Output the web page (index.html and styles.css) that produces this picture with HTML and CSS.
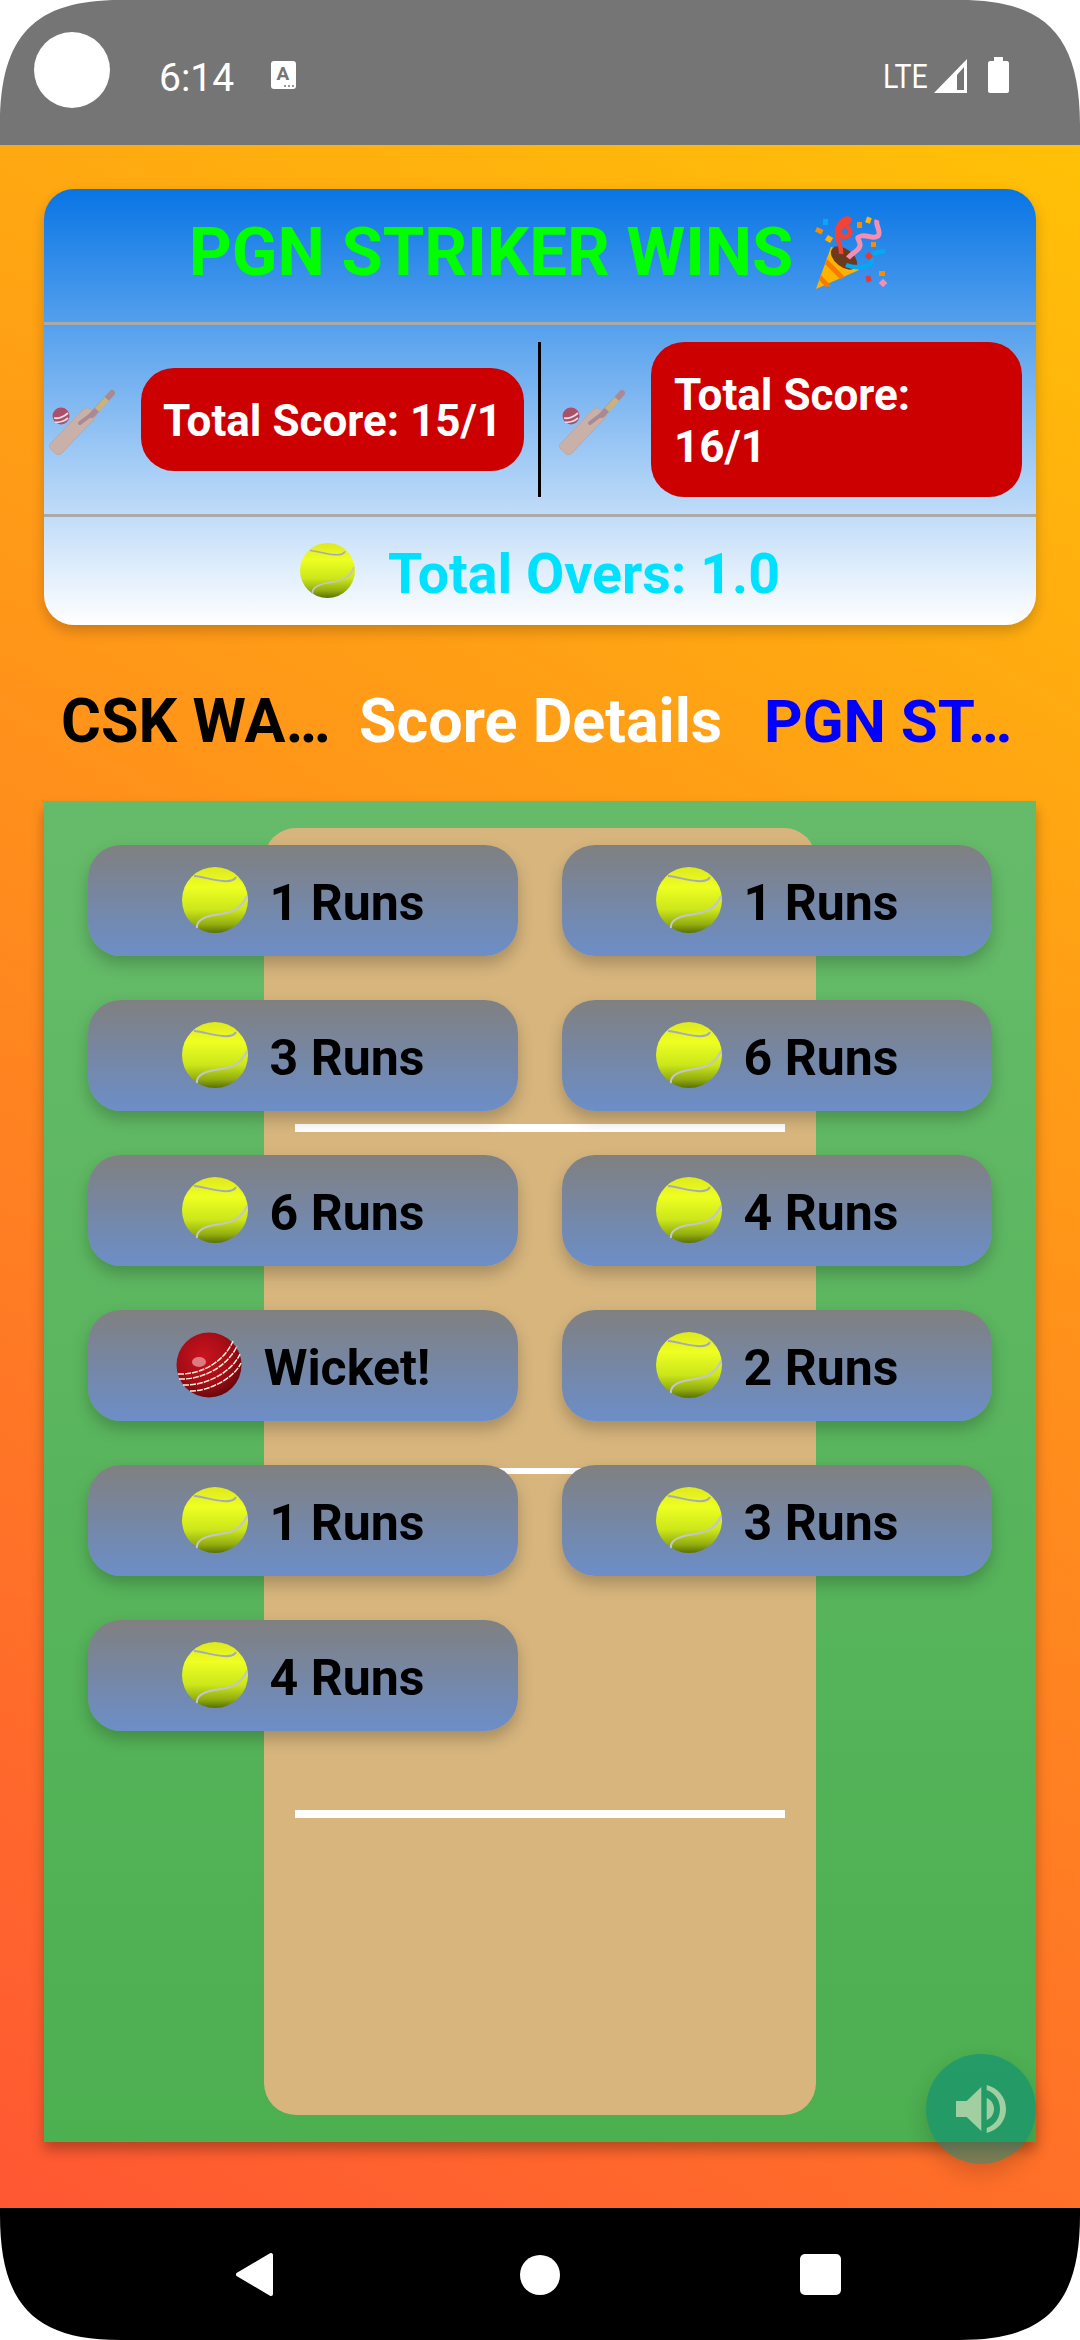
FILE: index.html
```html
<!DOCTYPE html>
<html>
<head>
	<meta charset="utf-8">
	<title>Match Result</title>
	<link rel="stylesheet" href="styles.css">
</head>
<body>
	<!-- shared drawings -->
	<svg class="sprite" aria-hidden="true">
		<defs>
			<linearGradient id="tennisFill" x1="0" y1="0" x2="0" y2="1">
				<stop offset="0" stop-color="#dfe81e"/>
				<stop offset="0.3" stop-color="#eeff22"/>
				<stop offset="0.65" stop-color="#cbe61a"/>
				<stop offset="0.87" stop-color="#93ad10"/>
				<stop offset="1" stop-color="#597000"/>
			</linearGradient>
			<radialGradient id="cricketFill" cx="0.42" cy="0.38" r="0.68">
				<stop offset="0" stop-color="#c9141f"/>
				<stop offset="0.6" stop-color="#a50c16"/>
				<stop offset="1" stop-color="#5c060b"/>
			</radialGradient>
			<symbol id="tennis" viewBox="0 0 66 66">
				<circle cx="33" cy="33" r="33" fill="url(#tennisFill)"/>
				<path d="M12 9C22 10 30 13 41 14C47 14.500 52 14 54 10" fill="none" stroke="#a4aab8" stroke-width="2"/>
				<path d="M15 61C14 54 22 50 32 48C45 46 58 45 65 29" fill="none" stroke="#c2c6cc" stroke-width="2"/>
			</symbol>
			<symbol id="cricket" viewBox="0 0 66 66">
				<circle cx="33" cy="33" r="32.500" fill="url(#cricketFill)"/>
				<ellipse cx="23" cy="30" rx="7" ry="5" fill="#eeb4b4" opacity="0.65"/>
				<g fill="none" stroke="#fbeed8" stroke-width="1.500" stroke-dasharray="6 1">
					<path d="M2 42C25 43 48 30 57 9"/>
					<path d="M3 47C27 48 52 34 61 14"/>
					<path d="M7 53C30 54 56 40 64 22"/>
					<path d="M14 59C34 59 58 46 65 31"/>
				</g>
			</symbol>
			<symbol id="bat" viewBox="19 19 66 67">
				<path d="M21 74L52 42C54 40 56 39 58 39L65 43C67 46 66 48 64 50L32 84C30 86 27 86 25 84L20 79C19 77 19 76 21 74Z" fill="#c9b1a9" stroke="#bda79f" stroke-width="1"/>
				<path d="M50 54L66 42" stroke="#a98a94" stroke-width="4" stroke-linecap="round"/>
				<path d="M62 46L82 24" stroke="#a98a94" stroke-width="6" stroke-linecap="round"/>
				<path d="M67 41L77 30" stroke="#c9b27e" stroke-width="6"/>
				<circle cx="31" cy="47" r="8.500" fill="#ac5069"/>
				<path d="M24 49C28 50 34 48 38 44M25 53C29 54 35 52 38 49" fill="none" stroke="#e3dce6" stroke-width="1.800"/>
			</symbol>
		</defs>
	</svg>

	<div class="screen">
		<header class="statusbar">
			<span class="camera"></span>
			<span class="clock">6:14</span>
			<svg class="a-icon" viewBox="0 0 25 28">
				<rect width="25" height="28" rx="3" fill="#fff"/>
				<text x="12" y="19" text-anchor="middle" class="a-letter">A</text>
				<circle cx="14" cy="25" r="1" fill="#757575"/>
				<circle cx="18" cy="25" r="1" fill="#757575"/>
				<circle cx="22" cy="25" r="1" fill="#757575"/>
			</svg>
			<span class="spacer"></span>
			<span class="lte">LTE</span>
			<svg class="signal" viewBox="0 0 33 34">
				<path d="M33 0V34H0ZM23 16V31H30V8Z" fill="#fff" fill-rule="evenodd"/>
			</svg>
			<svg class="battery" viewBox="0 0 21 36">
				<path d="M6 0H15V4H19C20 4 21 5 21 6V34C21 35 20 36 19 36H2C1 36 0 35 0 34V6C0 5 1 4 2 4H6Z" fill="#fff"/>
			</svg>
		</header>

		<main class="page">
			<section class="summary">
				<div class="result">
					<span>PGN STRIKER WINS</span>
					<!-- party popper -->
					<svg class="popper" viewBox="14 13 72 74">
						<path d="M15 87L30 45C38 47 52 58 58 68Z" fill="#ffb300"/>
						<path d="M26 57L44 75L39 77L24 62ZM20 73L30 84L25 85L18 78Z" fill="#f57c00"/>
						<ellipse cx="43" cy="56" rx="15" ry="9" transform="rotate(38 43 56)" fill="#6d3a1c"/>
						<path d="M40 52C41 44 36 40 36 31C36 22 44 15 48 17C50 18 47 21 42 24C37 27 38 35 44 35C50 35 52 26 45 25" fill="none" stroke="#f44336" stroke-width="4.500"/>
						<path d="M47 56C52 50 60 48 59 42C58 36 54 36 60 34C66 32 72 38 77 34C81 30 74 24 76 18" fill="none" stroke="#f48fb1" stroke-width="5"/>
						<path d="M45 63C52 66 62 66 68 63C74 60 68 54 72 52C76 50 80 50 84 49" fill="none" stroke="#03a9f4" stroke-width="4.500"/>
						<g>
							<rect x="22" y="17" width="5" height="6" fill="#03a9f4"/>
							<rect x="15" y="26" width="7" height="5" fill="#fb8c00" transform="rotate(25 18 28)"/>
							<rect x="25" y="34" width="6" height="6" fill="#ffb300" transform="rotate(30 28 37)"/>
							<rect x="56" y="20" width="5" height="6" fill="#fb8c00"/>
							<rect x="65" y="15" width="5" height="6" fill="#ffb300" transform="rotate(20 67 18)"/>
							<rect x="70" y="40" width="5" height="5" fill="#fb8c00"/>
							<rect x="65" y="51" width="6" height="6" fill="#e53935" transform="rotate(45 68 54)"/>
							<rect x="78" y="69" width="6" height="5" fill="#fb8c00"/>
							<rect x="65" y="74" width="5" height="6" fill="#e53935" transform="rotate(-15 67 77)"/>
							<rect x="79" y="78" width="6" height="6" fill="#f48fb1" transform="rotate(45 82 81)"/>
						</g>
					</svg>
				</div>
				<div class="scores">
					<div class="side">
						<svg class="bat"><use href="#bat"/></svg>
						<div class="badge badge-left">Total Score: 15/1</div>
					</div>
					<span class="vline"></span>
					<div class="side side-right">
						<svg class="bat"><use href="#bat"/></svg>
						<div class="badge">Total Score: 16/1</div>
					</div>
				</div>
				<div class="overs">
					<svg class="overs-ball"><use href="#tennis"/></svg>
					<span class="overs-text">Total Overs: 1.0</span>
				</div>
			</section>

			<nav class="tabs">
				<span class="tab tab-black">CSK WA…</span>
				<span class="tab tab-white">Score Details</span>
				<span class="tab tab-blue">PGN ST…</span>
			</nav>

			<section class="field">
				<div class="pitch">
					<span class="crease"></span>
					<span class="crease crease-thin"></span>
					<span class="crease"></span>
				</div>
				<div class="balls">
					<div class="ball-btn"><svg class="ball"><use href="#tennis"/></svg>1 Runs</div>
					<div class="ball-btn"><svg class="ball"><use href="#tennis"/></svg>1 Runs</div>
					<div class="ball-btn"><svg class="ball"><use href="#tennis"/></svg>3 Runs</div>
					<div class="ball-btn"><svg class="ball"><use href="#tennis"/></svg>6 Runs</div>
					<div class="ball-btn"><svg class="ball"><use href="#tennis"/></svg>6 Runs</div>
					<div class="ball-btn"><svg class="ball"><use href="#tennis"/></svg>4 Runs</div>
					<div class="ball-btn"><svg class="ball"><use href="#cricket"/></svg>Wicket!</div>
					<div class="ball-btn"><svg class="ball"><use href="#tennis"/></svg>2 Runs</div>
					<div class="ball-btn"><svg class="ball"><use href="#tennis"/></svg>1 Runs</div>
					<div class="ball-btn"><svg class="ball"><use href="#tennis"/></svg>3 Runs</div>
					<div class="ball-btn"><svg class="ball"><use href="#tennis"/></svg>4 Runs</div>
				</div>
			</section>

			<button class="fab" type="button">
				<svg viewBox="0 0 110 110" width="110" height="110">
					<path d="M30 47H40.700L55.300 33V77L40.700 63H30Z"/>
					<path d="M60.700 44C65 45.500 68 50 68 55C68 60 65 64.500 60.700 66Z"/>
					<path d="M60.700 31C72 34 80 43 80 55C80 67 72 76 60.700 79V74C69 71 74 64 74 55C74 46 69 39 60.700 36Z"/>
				</svg>
			</button>
		</main>

		<footer class="navbar">
			<svg class="nav-back" viewBox="0 0 39 45">
				<path d="M2 22.500L35 3V42Z" fill="#fff" stroke="#fff" stroke-width="4" stroke-linejoin="round"/>
			</svg>
			<span class="nav-home"></span>
			<span class="nav-recent"></span>
		</footer>
	</div>

	<!-- white device corners on top of everything -->
	<svg class="corners" viewBox="0 0 1080 2340">
		<path d="M0 0H120C35 0 0 35 0 125ZM1080 0H960C1045 0 1080 35 1080 125ZM0 2340H120C35 2340 0 2305 0 2215ZM1080 2340H960C1045 2340 1080 2305 1080 2215Z" fill="#fff"/>
	</svg>
</body>
</html>
```

FILE: styles.css
```css
* {
	margin: 0;
	padding: 0;
	box-sizing: border-box;
}
body {
	position: relative;
	width: 1080px;
	height: 2340px;
	overflow: hidden;
	background: #fff;
	font-family: Roboto, "Noto Sans", sans-serif;
}
.sprite {
	position: absolute;
	width: 0;
	height: 0;
}
.corners {
	position: absolute;
	top: 0;
	left: 0;
	width: 1080px;
	height: 2340px;
	pointer-events: none;
}
.screen {
	display: flex;
	flex-direction: column;
	height: 2340px;
}

/* status bar */
.statusbar {
	display: flex;
	align-items: flex-start;
	height: 145px;
	padding-left: 34px;
	background: #757575;
	color: #fff;
}
.camera {
	width: 76px;
	height: 76px;
	margin-top: 32px;
	border-radius: 50%;
	background: #fff;
}
.clock {
	margin: 55px 0 0 49px;
	font-size: 39px;
	line-height: 46px;
}
.a-icon {
	width: 25px;
	height: 28px;
	margin: 61px 0 0 37px;
}
.a-letter {
	font-size: 19px;
	font-weight: 700;
	fill: #757575;
}
.spacer {
	flex: 1;
}
.lte {
	width: 46px;
	margin-top: 56px;
	font-size: 34px;
	line-height: 40px;
	white-space: nowrap;
	transform: scaleX(0.84);
	transform-origin: left center;
}
.signal {
	width: 33px;
	height: 34px;
	margin: 59px 0 0 5px;
}
.battery {
	width: 21px;
	height: 36px;
	margin: 57px 71px 0 21px;
}

/* main area */
.page {
	position: relative;
	flex: 1;
	padding: 44px 44px 0;
	background: linear-gradient(210deg, #ffc107, #ff5733);
}
.summary {
	height: 436px;
	border-radius: 30px;
	background: linear-gradient(to bottom, #0875e5, #fff);
	box-shadow: 0 6px 14px rgba(0, 0, 0, 0.2);
}
.result {
	display: flex;
	align-items: center;
	justify-content: center;
	gap: 22px;
	height: 133px;
	padding: 0 4px 8px 0;
	font-size: 67px;
	font-weight: 700;
	color: #00ff00;
}
.popper {
	width: 72px;
	height: 74px;
}
.scores {
	display: flex;
	align-items: center;
	height: 195px;
	padding: 0 14px 0 5px;
	border-top: 3px solid #aaa;
	border-bottom: 3px solid #aaa;
}
.side {
	display: flex;
	align-items: center;
	gap: 26px;
	flex: none;
}
.side-right {
	flex: 1;
	margin-left: 18px;
}
.bat {
	flex: none;
	width: 66px;
	height: 67px;
	margin-top: 4px;
}
.badge {
	padding: 27px 23px 24px;
	border-radius: 33px;
	background: #cc0000;
	color: #fff;
	font-size: 44px;
	line-height: 52px;
	font-weight: 700;
}
.badge-left {
	width: 383px;
	padding-left: 22px;
	padding-right: 0;
}
.side-right .badge {
	flex: 1;
}
.vline {
	flex: none;
	width: 3px;
	height: 155px;
	margin-left: 14px;
	background: #000;
}
.overs {
	display: flex;
	align-items: center;
	justify-content: center;
	gap: 33px;
	height: 108px;
	font-size: 55.500px;
	font-weight: 700;
	color: #00e0ff;
}
.overs-ball {
	width: 55px;
	height: 55px;
	margin-bottom: 2px;
}
.overs-text {
	padding-top: 7px;
}

/* tabs */
.tabs {
	display: flex;
	align-items: center;
	height: 176px;
	padding: 16px 0 0 17px;
	font-size: 60px;
	font-weight: 700;
	white-space: nowrap;
}
.tab-black {
	width: 298px;
	font-size: 61px;
	color: #000;
}
.tab-white {
	width: 405px;
	font-size: 61px;
	color: #fff;
}
.tab-blue {
	color: #0000ff;
}

/* field */
.field {
	position: relative;
	height: 1341px;
	padding: 44px;
	background: linear-gradient(to bottom, #66bb6a, #4caf50);
	box-shadow: 0 8px 12px rgba(0, 0, 0, 0.28);
}
.pitch {
	position: absolute;
	top: 27px;
	left: 220px;
	display: flex;
	flex-direction: column;
	align-items: center;
	gap: 336px;
	width: 552px;
	height: 1287px;
	padding-top: 296px;
	border-radius: 32px;
	background: #d7b57d;
}
.crease {
	width: 490px;
	height: 8px;
	background: #fff;
}
.crease-thin {
	height: 6px;
}
.balls {
	position: relative;
	display: grid;
	grid-template-columns: 430px 430px;
	grid-auto-rows: 111px;
	gap: 44px;
}
.ball-btn {
	display: flex;
	align-items: center;
	justify-content: center;
	gap: 22px;
	padding-top: 4px;
	border-radius: 33px;
	background: linear-gradient(to bottom, #808080, #6c8ec8);
	box-shadow: 0 8px 16px rgba(0, 0, 0, 0.22);
	font-size: 50px;
	font-weight: 700;
	color: #000;
}
.ball {
	width: 66px;
	height: 66px;
	margin-bottom: 6px;
}

/* sound button */
.fab {
	position: absolute;
	top: 1909px;
	left: 926px;
	width: 110px;
	height: 110px;
	border: none;
	border-radius: 50%;
	background: rgba(0, 137, 123, 0.52);
	box-shadow: 0 10px 22px rgba(0, 0, 0, 0.16);
}
.fab svg {
	display: block;
	fill: #a2cfa2;
}

/* navigation bar */
.navbar {
	position: relative;
	height: 132px;
	background: #000;
}
.nav-back,
.nav-home,
.nav-recent {
	position: absolute;
}
.nav-back {
	top: 44px;
	left: 236px;
	width: 39px;
	height: 45px;
}
.nav-home {
	top: 47px;
	left: 520px;
	width: 40px;
	height: 40px;
	border-radius: 50%;
	background: #fff;
}
.nav-recent {
	top: 46px;
	left: 800px;
	width: 41px;
	height: 41px;
	border-radius: 5px;
	background: #fff;
}
```
